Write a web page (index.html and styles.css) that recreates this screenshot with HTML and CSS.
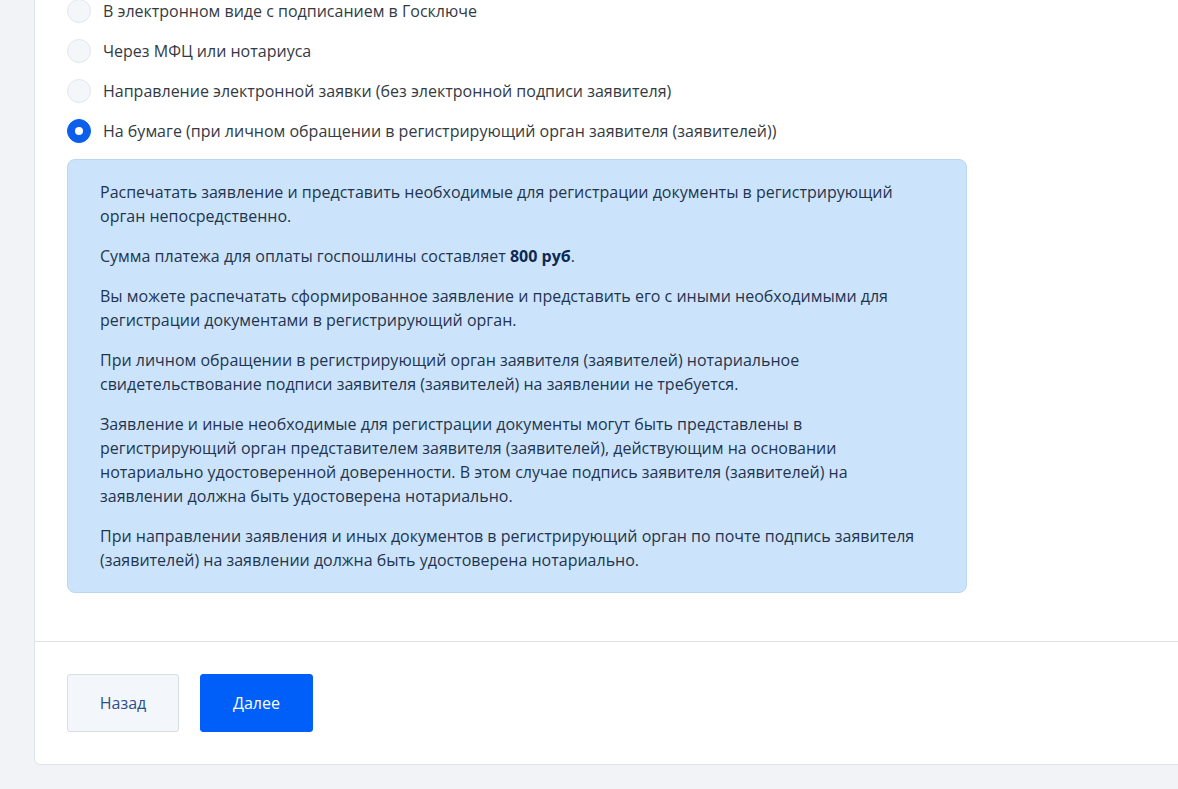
FILE: index.html
```html
<!DOCTYPE html>
<html lang="ru">
<head>
<meta charset="utf-8">
<title>Способ подачи</title>
<link rel="stylesheet" href="styles.css">
</head>
<body>
<div class="page">
  <div class="card">
    <div class="card-body">
      <div class="radio-group">
        <label class="radio-row"><span class="radio"></span><span class="radio-label">В электронном виде с подписанием в Госключе</span></label>
        <label class="radio-row"><span class="radio"></span><span class="radio-label">Через МФЦ или нотариуса</span></label>
        <label class="radio-row"><span class="radio"></span><span class="radio-label">Направление электронной заявки (без электронной подписи заявителя)</span></label>
        <label class="radio-row"><span class="radio checked"></span><span class="radio-label">На бумаге (при личном обращении в регистрирующий орган заявителя (заявителей))</span></label>
      </div>
      <div class="info">
        <p>Распечатать заявление и представить необходимые для регистрации документы в регистрирующий орган непосредственно.</p>
        <p>Сумма платежа для оплаты госпошлины составляет <b>800 руб</b>.</p>
        <p>Вы можете распечатать сформированное заявление и представить его с иными необходимыми для регистрации документами в регистрирующий орган.</p>
        <p>При личном обращении в регистрирующий орган заявителя (заявителей) нотариальное свидетельствование подписи заявителя (заявителей) на заявлении не требуется.</p>
        <p>Заявление и иные необходимые для регистрации документы могут быть представлены в регистрирующий орган представителем заявителя (заявителей), действующим на основании нотариально удостоверенной доверенности. В этом случае подпись заявителя (заявителей) на заявлении должна быть удостоверена нотариально.</p>
        <p>При направлении заявления и иных документов в регистрирующий орган по почте подпись заявителя (заявителей) на заявлении должна быть удостоверена нотариально.</p>
      </div>
    </div>
    <div class="card-footer">
      <button class="btn btn-secondary">Назад</button>
      <button class="btn btn-primary">Далее</button>
    </div>
  </div>
</div>
</body>
</html>
```

FILE: styles.css
```css
html, body {
  margin: 0;
  padding: 0;
  background: #f1f3f7;
  overflow: hidden;
}
body {
  font-family: "Open Sans", "Noto Sans", sans-serif;
  font-size: 16px;
  line-height: 24px;
  color: #333a44;
}
.page {
  padding-left: 34px;
  margin-top: -9px;
}
.card {
  width: 1200px;
  background: #ffffff;
  border: 1px solid #dfe2e7;
  border-top: none;
  border-radius: 0 0 6px 6px;
}
.card-body {
  padding: 0 32px 48px 32px;
  border-bottom: 1px solid #dde1e6;
}
.radio-group {
  display: flex;
  flex-direction: column;
}
.radio-row {
  display: flex;
  align-items: center;
  gap: 12px;
  padding: 8px 0;
  cursor: pointer;
}
.radio {
  flex: none;
  box-sizing: border-box;
  width: 24px;
  height: 24px;
  border-radius: 50%;
  background: #f4f6fa;
  border: 1px solid #e2e6ed;
  display: flex;
  align-items: center;
  justify-content: center;
}
.radio.checked {
  background: #0b5fea;
  border-color: #0b5fea;
}
.radio.checked::after {
  content: "";
  width: 8px;
  height: 8px;
  border-radius: 50%;
  background: #ffffff;
}
.radio-label {
  color: #333a44;
}
.info {
  width: 900px;
  box-sizing: border-box;
  margin-top: 8px;
  background: #cce4fb;
  border: 1px solid #b9d6f3;
  border-radius: 8px;
  padding: 20px 32px;
  color: #1f3450;
}
.info p {
  margin: 0 0 16px 0;
}
.info p:last-child {
  margin-bottom: 0;
}
.info b {
  font-weight: 700;
  color: #0e2a52;
}
.card-footer {
  display: flex;
  gap: 21px;
  padding: 32px 32px 32px 32px;
}
.btn {
  font-family: "Open Sans", "Noto Sans", sans-serif;
  font-size: 16px;
  height: 58px;
  border-radius: 3px;
  cursor: pointer;
}
.btn-secondary {
  width: 112px;
  background: #f3f6fa;
  border: 1px solid #d8dde4;
  color: #2d4f8e;
}
.btn-primary {
  width: 113px;
  background: #005ff8;
  border: 1px solid #005ff8;
  color: #ffffff;
  font-weight: 500;
}
```
